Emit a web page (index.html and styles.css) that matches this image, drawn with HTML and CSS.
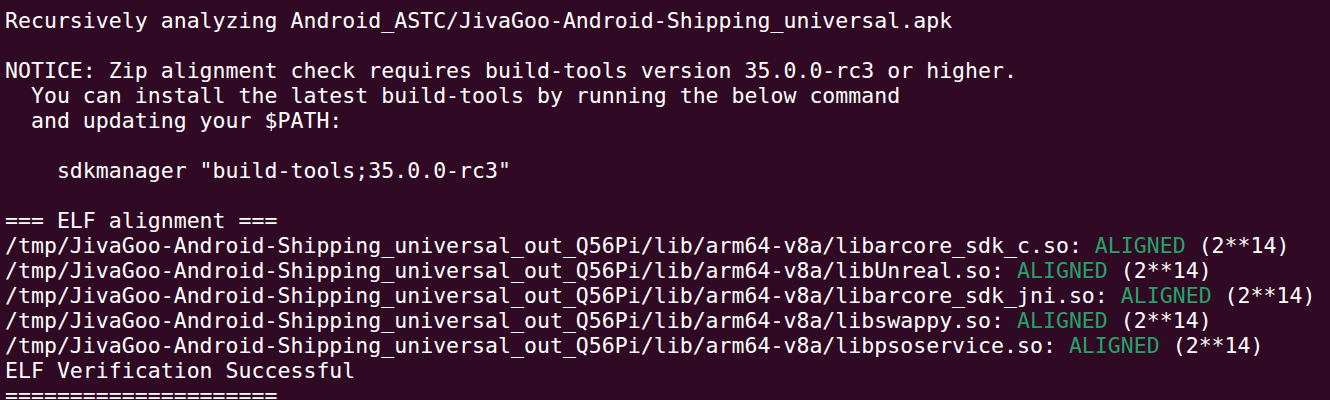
FILE: index.html
```html
<!DOCTYPE html>
<html>
<head>
<meta charset="utf-8">
<link rel="stylesheet" href="styles.css">
</head>
<body>
<pre class="term">Recursively analyzing Android_ASTC/JivaGoo-Android-Shipping_universal.apk

NOTICE: Zip alignment check requires build-tools version 35.0.0-rc3 or higher.
  You can install the latest build-tools by running the below command
  and updating your $PATH:

    sdkmanager "build-tools;35.0.0-rc3"

=== ELF alignment ===
/tmp/JivaGoo-Android-Shipping_universal_out_Q56Pi/lib/arm64-v8a/libarcore_sdk_c.so: <span class="ok">ALIGNED</span> (2**14)
/tmp/JivaGoo-Android-Shipping_universal_out_Q56Pi/lib/arm64-v8a/libUnreal.so: <span class="ok">ALIGNED</span> (2**14)
/tmp/JivaGoo-Android-Shipping_universal_out_Q56Pi/lib/arm64-v8a/libarcore_sdk_jni.so: <span class="ok">ALIGNED</span> (2**14)
/tmp/JivaGoo-Android-Shipping_universal_out_Q56Pi/lib/arm64-v8a/libswappy.so: <span class="ok">ALIGNED</span> (2**14)
/tmp/JivaGoo-Android-Shipping_universal_out_Q56Pi/lib/arm64-v8a/libpsoservice.so: <span class="ok">ALIGNED</span> (2**14)
ELF Verification Successful
=====================</pre>
</body>
</html>
```
FILE: styles.css
```css
html, body {
  margin: 0;
  padding: 0;
  background: #300a24;
  height: 100%;
  overflow: hidden;
}
.term {
  margin: 0;
  padding: 8px 0 0 5px;
  font-family: "DejaVu Sans Mono", "Liberation Mono", monospace;
  font-size: 21.5px;
  letter-spacing: 0.03px;
  line-height: 25px;
  color: #ffffff;
  white-space: pre;
}
.ok {
  color: #26a269;
}
```
